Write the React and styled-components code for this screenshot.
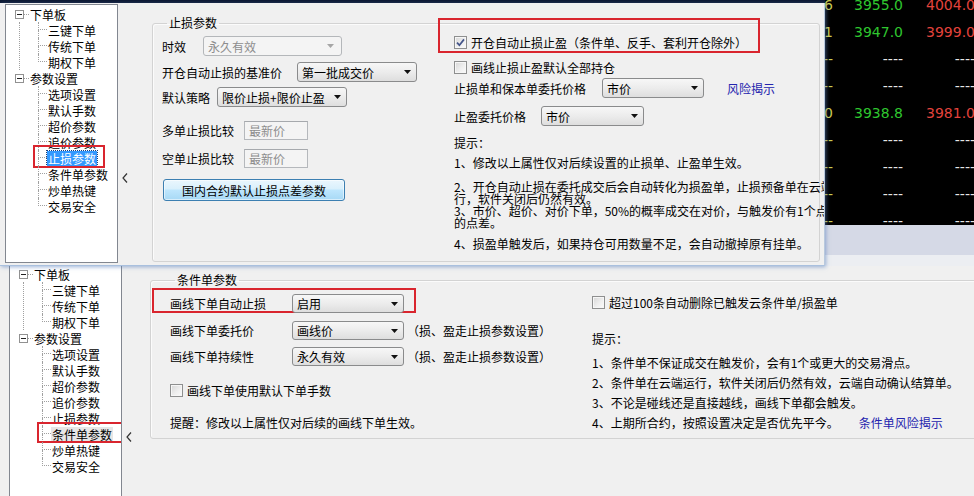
import React from "react";
import styled, { createGlobalStyle } from "styled-components";

const GlobalStyle = createGlobalStyle`
  html, body {
    margin: 0;
    padding: 0;
    background: #f0f0f0;
    overflow: hidden;
  }
  body {
    font-family: "Noto Sans CJK SC", "Liberation Sans", sans-serif;
    font-size: 12px;
    color: #000;
  }
`;

const Screen = styled.div`
  width: 974px;
  height: 496px;
  overflow: hidden;
  display: flex;
  flex-direction: column;
`;

const TopArea = styled.div`
  height: 266px;
  flex: none;
  display: flex;
  background: #0c1832;
`;

const Dialog = styled.div`
  width: 825px;
  height: 263px;
  margin-top: 3px;
  flex: none;
  box-sizing: border-box;
  display: flex;
  align-items: flex-start;
  padding: 1px 0 0 5px;
  background: #f0f0f0;
  border-right: 1px solid #b9c9dd;
  border-bottom: 1px solid #a9c0de;
  box-shadow: 1px 1px 4px rgba(90, 130, 190, 0.6);
  position: relative;
  z-index: 2;
  overflow: hidden;
`;

const Quotes = styled.div`
  flex: 1;
  overflow: hidden;
  background: linear-gradient(
    #000 0,
    #000 225px,
    #d5d9e6 225px,
    #d5d9e6 255px,
    #eceef2 255px
  );
  font-family: "DejaVu Sans", sans-serif;
  font-size: 14px;
`;

const QuoteGrid = styled.div`
  display: grid;
  grid-template-columns: 8px 70px 72px;
  grid-auto-rows: 27px;
  margin-top: -9px;
`;

const Cell = styled.div`
  display: flex;
  align-items: center;
  justify-content: flex-end;
  white-space: nowrap;
  color: ${(p) => p.$color};
`;

const Window = styled.div`
  flex: 1;
  display: flex;
  align-items: flex-start;
  padding-left: 9px;
  background: #f0f0f0;
  overflow: hidden;
`;

/* ---------- tree ---------- */

const TreePanel = styled.div`
  width: 113px;
  height: ${(p) => p.$h}px;
  flex: none;
  box-sizing: border-box;
  background: #fff;
  border: 1px solid #828790;
  border-top: ${(p) => (p.$noTop ? "none" : "1px solid #828790")};
  padding-top: ${(p) => p.$pt}px;
  overflow: hidden;
`;

const RootRow = styled.div`
  height: 16px;
  display: flex;
  align-items: center;
`;

const Expander = styled.span`
  width: 9px;
  height: 9px;
  margin-left: 9px;
  box-sizing: border-box;
  border: 1px solid #919191;
  background: #fff;
  display: flex;
  align-items: center;
  justify-content: center;
  flex: none;
  &::after {
    content: "";
    width: 5px;
    height: 1px;
    background: #222;
  }
`;

const Stub = styled.span`
  width: 5px;
  flex: none;
  border-top: 1px dotted #a0a0a0;
`;

const ItemText = styled.span`
  padding: 0 1px;
  line-height: 15px;
  white-space: nowrap;
  background: ${(p) =>
    p.$sel === "focus" ? "#3399ff" : p.$sel === "blur" ? "#e6e6e6" : "transparent"};
  color: ${(p) => (p.$sel === "focus" ? "#fff" : "#000")};
  outline: ${(p) => (p.$sel === "focus" ? "1px dotted #1a3d7a" : "none")};
`;

const ChildList = styled.div`
  margin-left: 13px;
  padding-left: 18px;
  border-left: 1px dotted ${(p) => (p.$line ? "#a0a0a0" : "transparent")};
`;

const ChildRow = styled.div`
  height: 16px;
  display: flex;
  align-items: center;
  position: relative;
`;

const Branch = styled.span`
  width: 9px;
  height: 16px;
  flex: none;
  display: flex;
  flex-direction: column;
  &::before {
    content: "";
    height: 8px;
    box-sizing: border-box;
    border-left: 1px dotted #a0a0a0;
    border-bottom: 1px dotted #a0a0a0;
  }
  &::after {
    content: "";
    flex: 1;
    border-left: 1px dotted ${(p) => (p.$last ? "transparent" : "#a0a0a0")};
  }
`;

const TreeMark = styled.span`
  position: absolute;
  left: -5px;
  top: ${(p) => p.$top}px;
  width: ${(p) => p.$w}px;
  height: ${(p) => p.$h}px;
  box-sizing: border-box;
  border: 2px solid #d9252e;
  pointer-events: none;
`;

const tree = [
  { label: "下单板", children: ["三键下单", "传统下单", "期权下单"] },
  {
    label: "参数设置",
    children: ["选项设置", "默认手数", "超价参数", "追价参数", "止损参数", "条件单参数", "炒单热键", "交易安全"],
  },
];

function Tree({ selected, selMode, mark, h, pt, noTop }) {
  return (
    <TreePanel $h={h} $pt={pt} $noTop={noTop}>
      {tree.map((root, ri) => (
        <div key={root.label}>
          <RootRow>
            <Expander />
            <Stub />
            <ItemText>{root.label}</ItemText>
          </RootRow>
          <ChildList $line={ri < tree.length - 1}>
            {root.children.map((c, i) => (
              <ChildRow key={c}>
                <Branch $last={i === root.children.length - 1} />
                <ItemText $sel={c === selected ? selMode : undefined}>{c}</ItemText>
                {c === selected && <TreeMark $top={mark.top} $w={mark.w} $h={mark.h} />}
              </ChildRow>
            ))}
          </ChildList>
        </div>
      ))}
    </TreePanel>
  );
}

const Collapse = styled.div`
  width: ${(p) => p.$w}px;
  flex: none;
  box-sizing: border-box;
  padding: ${(p) => p.$pt}px 0 0 4px;
  display: flex;
`;

function Chevron() {
  return (
    <svg width="6" height="10" viewBox="0 0 6 10">
      <path d="M5 0.5 L1 5 L5 9.5" fill="none" stroke="#333" strokeWidth="1.2" />
    </svg>
  );
}

/* ---------- group box ---------- */

const Group = styled.fieldset`
  margin: ${(p) => p.$mt}px 0 0 0;
  padding: 0 0 0 ${(p) => p.$pl}px;
  width: ${(p) => p.$w}px;
  height: ${(p) => p.$h}px;
  flex: none;
  box-sizing: border-box;
  min-width: 0;
  border: 1px solid #d3d3d3;
  border-radius: 3px;
  box-shadow: inset 1px 1px 0 #fbfbfb;
`;

const Legend = styled.legend`
  margin-left: 5px;
  padding: 0 2px;
  line-height: 14px;
`;

const Cols = styled.div`
  display: flex;
  align-items: flex-start;
`;

const Col = styled.div`
  width: ${(p) => (p.$w ? `${p.$w}px` : "auto")};
  flex: none;
  display: flex;
  flex-direction: column;
  align-items: flex-start;
`;

const Row = styled.div`
  display: flex;
  align-items: center;
  gap: ${(p) => p.$gap || 0}px;
  margin-top: ${(p) => p.$mt || 0}px;
  margin-bottom: ${(p) => p.$mb || 0}px;
  white-space: nowrap;
`;

const Label = styled.span`
  width: ${(p) => (p.$w ? `${p.$w}px` : "auto")};
  margin-left: ${(p) => p.$ml || 0}px;
  flex: none;
  white-space: nowrap;
`;

const RedFrame = styled.div`
  margin: ${(p) => p.$mt}px 0 0 ${(p) => p.$ml}px;
  width: ${(p) => p.$w}px;
  height: ${(p) => p.$h}px;
  box-sizing: border-box;
  border: 2px solid #d9252e;
  padding: 0 0 ${(p) => p.$pb}px ${(p) => p.$pl}px;
  display: flex;
  align-items: flex-end;
`;

const ComboBox = styled.div`
  width: ${(p) => p.$w}px;
  height: ${(p) => p.$h || 20}px;
  flex: none;
  box-sizing: border-box;
  display: flex;
  align-items: center;
  justify-content: space-between;
  padding: 0 ${(p) => (p.$disabled ? 7 : 5)}px 0 4px;
  border: 1px solid ${(p) => (p.$disabled ? "#b4b7ba" : "#8a8b8c")};
  border-radius: 3px;
  background: ${(p) =>
    p.$disabled ? "#f4f4f4" : "linear-gradient(#f7f7f7 0%, #ececec 50%, #dedede 100%)"};
  color: ${(p) => (p.$disabled ? "#8d8d8d" : "#000")};
  white-space: nowrap;
`;

function Combo({ w, h, disabled, children }) {
  return (
    <ComboBox $w={w} $h={h} $disabled={disabled}>
      <span>{children}</span>
      <svg width="7" height="4" viewBox="0 0 7 4">
        <path d="M0 0H7L3.5 4Z" fill={disabled ? "#a6a6a6" : "#111"} />
      </svg>
    </ComboBox>
  );
}

const TextBox = styled.div`
  width: 64px;
  height: 19px;
  box-sizing: border-box;
  border: 1px solid #b5b8bc;
  border-top-color: #a6a9ad;
  background: #f4f4f4;
  color: #8d8d8d;
  padding-left: 4px;
  display: flex;
  align-items: center;
`;

const Button = styled.div`
  width: 182px;
  height: 22px;
  margin: ${(p) => p.$mt}px 0 0 1px;
  box-sizing: border-box;
  border: 1px solid #3c7fb1;
  border-radius: 3px;
  background: linear-gradient(#eaf6fd 0%, #d9f0fc 45%, #bee6fd 50%, #a7d9f5 100%);
  box-shadow: inset 0 0 0 1px rgba(255, 255, 255, 0.55);
  display: flex;
  align-items: center;
  justify-content: center;
`;

const Box = styled.span`
  width: 13px;
  height: 13px;
  flex: none;
  box-sizing: border-box;
  border: 1px solid #8e8f8f;
  background: linear-gradient(135deg, #d6d6d6 0%, #eeeeee 55%, #fbfbfb 100%);
  box-shadow: inset 0 0 0 1px #f6f6f6;
  display: flex;
  align-items: center;
  justify-content: center;
`;

const CheckLine = styled.div`
  height: 14px;
  display: flex;
  align-items: center;
  gap: 4px;
  margin-top: ${(p) => p.$mt || 0}px;
  white-space: nowrap;
`;

function Check({ checked, children, mt }) {
  return (
    <CheckLine $mt={mt}>
      <Box>
        {checked && (
          <svg width="9" height="9" viewBox="0 0 9 9">
            <path d="M1 4.6 L3.4 7.2 L8 1.4" fill="none" stroke="#44558a" strokeWidth="1.7" />
          </svg>
        )}
      </Box>
      <span>{children}</span>
    </CheckLine>
  );
}

const Text = styled.div`
  margin-top: ${(p) => p.$mt || 0}px;
  line-height: ${(p) => p.$lh || 14}px;
  white-space: nowrap;
`;

const Link = styled.span`
  color: #2424ae;
  margin-left: ${(p) => p.$ml}px;
`;

export default function App() {
  const quotes = [
    ["126", "3955.0", "4004.0"],
    ["41", "3947.0", "3999.0"],
    ["--", "----", "----"],
    ["--", "----", "----"],
    ["50", "3938.8", "3981.0"],
    ["--", "----", "----"],
    ["--", "----", "----"],
    ["--", "----", "----"],
    ["--", "----", "----"],
  ];

  return (
    <Screen>
      <GlobalStyle />
      <TopArea>
        <Dialog>
          <Tree h={259} pt={1} selected="止损参数" selMode="focus" mark={{ top: -5, w: 72, h: 23 }} />
          <Collapse $w={34} $pt={169}>
            <Chevron />
          </Collapse>
          <Group $mt={12} $pl={9} $w={668} $h={246}>
            <Legend>止损参数</Legend>
            <Cols>
              <Col $w={292}>
                <Row $mt={6} $gap={17}>
                  <Label>时效</Label>
                  <Combo w={139} disabled>永久有效</Combo>
                </Row>
                <Row $mt={6} $gap={15}>
                  <Label>开仓自动止损的基准价</Label>
                  <Combo w={120}>第一批成交价</Combo>
                </Row>
                <Row $mt={5} $gap={7}>
                  <Label>默认策略</Label>
                  <Combo w={130}>限价止损+限价止盈</Combo>
                </Row>
                <Row $mt={14} $gap={10}>
                  <Label>多单止损比较</Label>
                  <TextBox>最新价</TextBox>
                </Row>
                <Row $mt={9} $gap={10}>
                  <Label>空单止损比较</Label>
                  <TextBox>最新价</TextBox>
                </Row>
                <Button $mt={11}>国内合约默认止损点差参数</Button>
              </Col>
              <Col>
                <RedFrame $mt={-12} $ml={-16} $w={322} $h={35} $pl={14} $pb={2}>
                  <Check checked>开仓自动止损止盈（条件单、反手、套利开仓除外）</Check>
                </RedFrame>
                <Check mt={7}>画线止损止盈默认全部持仓</Check>
                <Row $mt={4} $gap={16}>
                  <Label>止损单和保本单委托价格</Label>
                  <Combo w={102}>市价</Combo>
                  <Link $ml={7}>风险揭示</Link>
                </Row>
                <Row $mt={8} $gap={15}>
                  <Label>止盈委托价格</Label>
                  <Combo w={103}>市价</Combo>
                </Row>
                <Text $mt={10}>提示：</Text>
                <Text $mt={7} $lh={12}>1、修改以上属性仅对后续设置的止损单、止盈单生效。</Text>
                <Text $mt={12} $lh={12}>
                  2、开仓自动止损在委托成交后会自动转化为损盈单，止损预备单在云端运
                  <br />
                  行，软件关闭后仍然有效。
                </Text>
                <Text $lh={12}>
                  3、市价、超价、对价下单，50%的概率成交在对价，与触发价有1个点
                  <br />
                  的点差。
                </Text>
                <Text $mt={9} $lh={12}>4、损盈单触发后，如果持仓可用数量不足，会自动撤掉原有挂单。</Text>
              </Col>
            </Cols>
          </Group>
        </Dialog>
        <Quotes>
          <QuoteGrid>
            {quotes.map((q, i) => (
              <React.Fragment key={i}>
                <Cell $color="#cccc55">{q[0]}</Cell>
                <Cell $color={q[1] === "----" ? "#e6e6e6" : "#2fc62f"}>{q[1]}</Cell>
                <Cell $color={q[2] === "----" ? "#e6e6e6" : "#e3433c"}>{q[2]}</Cell>
              </React.Fragment>
            ))}
          </QuoteGrid>
        </Quotes>
      </TopArea>

      <Window>
        <Tree h={240} pt={0} noTop selected="条件单参数" selMode="blur" mark={{ top: -4, w: 86, h: 21 }} />
        <Collapse $w={28} $pt={166}>
          <Chevron />
        </Collapse>
        <Group $mt={7} $pl={19} $w={850} $h={166}>
          <Legend>条件单参数</Legend>
          <Cols>
            <Col $w={422}>
              <RedFrame $mt={1} $ml={-18} $w={264} $h={25} $pl={16} $pb={0}>
                <Row $mb={-2}>
                  <Label $w={122}>画线下单自动止损</Label>
                  <Combo w={112} h={19}>启用</Combo>
                </Row>
              </RedFrame>
              <Row $mt={8}>
                <Label $w={122}>画线下单委托价</Label>
                <Combo w={112} h={19}>画线价</Combo>
                <Label $ml={3}>（损、盈走止损参数设置）</Label>
              </Row>
              <Row $mt={7}>
                <Label $w={122}>画线下单持续性</Label>
                <Combo w={112} h={19}>永久有效</Combo>
                <Label $ml={3}>（损、盈走止损参数设置）</Label>
              </Row>
              <Check mt={17}>画线下单使用默认下单手数</Check>
              <Text $mt={19}>提醒：修改以上属性仅对后续的画线下单生效。</Text>
            </Col>
            <Col>
              <Check mt={8}>超过100条自动删除已触发云条件单/损盈单</Check>
              <Text $mt={23}>提示：</Text>
              <Text $mt={7} $lh={20}>1、条件单不保证成交在触发价，会有1个或更大的交易滑点。</Text>
              <Text $lh={20}>2、条件单在云端运行，软件关闭后仍然有效，云端自动确认结算单。</Text>
              <Text $lh={20}>3、不论是碰线还是直接越线，画线下单都会触发。</Text>
              <Text $lh={20}>
                4、上期所合约，按照设置决定是否优先平今。
                <Link $ml={20}>条件单风险揭示</Link>
              </Text>
            </Col>
          </Cols>
        </Group>
      </Window>
    </Screen>
  );
}
